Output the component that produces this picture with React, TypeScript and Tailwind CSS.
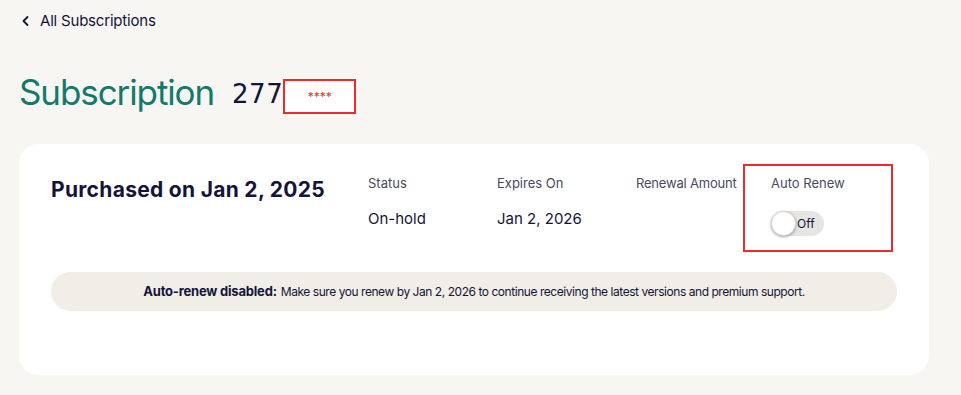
import { useState } from "react";

export default function App() {
  const [autoRenew, setAutoRenew] = useState(false);

  return (
    <div
      className="min-h-[395px] w-full bg-[#f7f6f2] text-[#14143a]"
      style={{ fontFamily: "Inter, 'Open Sans', sans-serif" }}
    >
      <div className="px-[19px] pt-[11px]">
        {/* back link */}
        <a href="#" className="flex items-center gap-[8px] text-[15px] leading-[20px] tracking-[-0.2px] text-[#14143a]">
          <svg width="12" height="12" viewBox="0 0 12 12" className="ml-[1px]">
            <path d="M7.5 2 L3.5 6 L7.5 10" stroke="#14143a" strokeWidth="1.8" fill="none" strokeLinecap="round" strokeLinejoin="round" />
          </svg>
          All Subscriptions
        </a>

        {/* title */}
        <div className="mt-[39px] flex items-center">
          <h1 className="text-[35px] leading-[44px] text-[#127a6c] tracking-[-1.1px]">Subscription</h1>
          <span
            className="ml-[18px] mt-[4px] text-[26px] leading-[32px] tracking-[0.5px] text-[#14143a]"
            style={{ fontFamily: "'DejaVu Sans', sans-serif" }}
          >
            277
          </span>
          <div className="mt-[8px] flex h-[35px] w-[73px] items-start justify-center border-2 border-[#ee2b2b] bg-white pt-[9px] text-[12px] leading-[14px] text-[#ee2b2b]">
            ****
          </div>
        </div>

        {/* card */}
        <div className="mt-[30px] h-[231px] w-[910px] rounded-[20px] bg-white px-8 pt-5">
          <div className="flex items-start">
            <div className="w-[317px] pt-[12px]">
              <h2 className="text-[21px] font-bold leading-[28px] tracking-[0.3px] text-[#14143a]">Purchased on Jan 2, 2025</h2>
            </div>

            <div className="w-[129px] pt-[10px]">
              <div className="text-[13px] leading-[18px] text-[#4a4a5e]">Status</div>
              <div className="mt-[17px] text-[15px] leading-[20px] text-[#14143a]">On-hold</div>
            </div>

            <div className="w-[139px] pt-[10px]">
              <div className="text-[13px] leading-[18px] text-[#4a4a5e]">Expires On</div>
              <div className="mt-[17px] text-[15px] leading-[20px] text-[#14143a]">Jan 2, 2026</div>
            </div>

            <div className="w-[107px] pt-[10px]">
              <div className="text-[13px] leading-[18px] tracking-[-0.2px] text-[#4a4a5e]">Renewal Amount</div>
            </div>

            <div className="h-[88px] w-[150px] border-2 border-[#ee2b2b] pl-[26px] pt-[8px]">
              <div className="text-[13px] leading-[18px] text-[#4a4a5e]">Auto Renew</div>
              <button
                type="button"
                onClick={() => setAutoRenew(!autoRenew)}
                className="relative mt-[19px] flex h-[25px] w-[53px] items-center rounded-full bg-[#e6e5e3]"
              >
                <span className="absolute left-0 top-0 h-[25px] w-[25px] rounded-full border border-[#d6d6d6] bg-white shadow-[0_1px_3px_rgba(0,0,0,0.35)]" />
                <span className="ml-[26px] text-[12px] leading-[14px] text-[#14143a]">{autoRenew ? "On" : "Off"}</span>
              </button>
            </div>
          </div>

          {/* notice */}
          <div className="mt-5 flex h-[39px] items-center justify-center rounded-full bg-[#f1ede7] text-[12px] text-[#14143a]">
            <span className="font-bold text-[13px] tracking-[-0.2px]">Auto-renew disabled:</span>
            <span className="ml-1 tracking-[-0.45px]">
              Make sure you renew by Jan 2, 2026 to continue receiving the latest versions and premium support.
            </span>
          </div>
        </div>
      </div>
    </div>
  );
}
